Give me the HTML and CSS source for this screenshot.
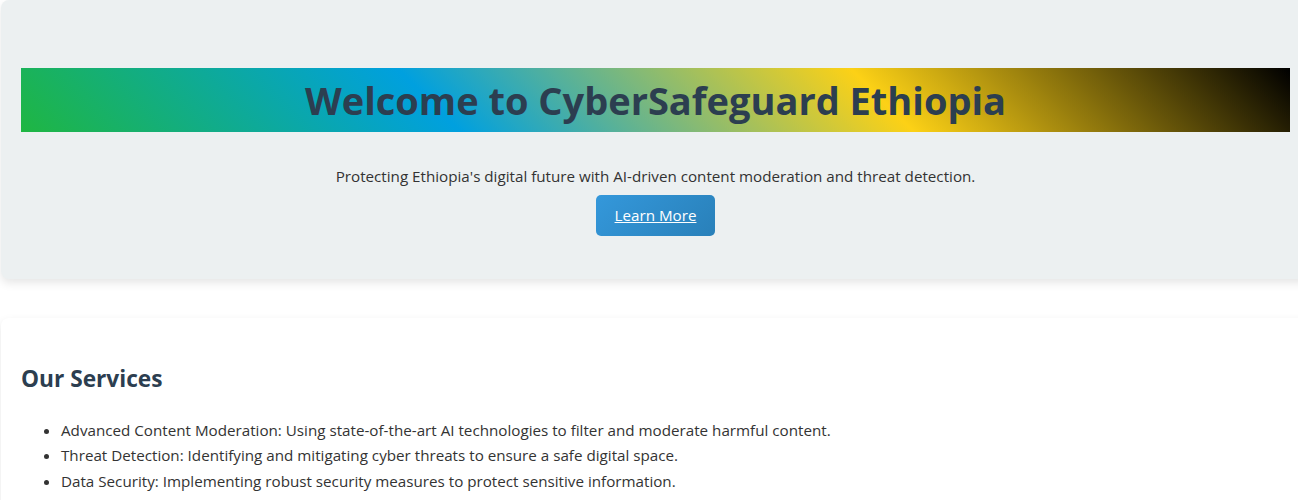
FILE: index.html
```html
<!DOCTYPE html>
<html lang="en">
<head>
<meta charset="utf-8">
<title>CyberSafeguard Ethiopia</title>
<link rel="stylesheet" href="styles.css">
</head>
<body>
<main class="page">
  <section class="hero">
    <h1 class="hero-title">Welcome to CyberSafeguard Ethiopia</h1>
    <p class="hero-text">Protecting Ethiopia's digital future with AI-driven content moderation and threat detection.</p>
    <div class="hero-actions">
      <a class="btn" href="#services">Learn More</a>
    </div>
  </section>
  <section class="card" id="services">
    <h2 class="card-title">Our Services</h2>
    <ul class="service-list">
      <li>Advanced Content Moderation: Using state-of-the-art AI technologies to filter and moderate harmful content.</li>
      <li>Threat Detection: Identifying and mitigating cyber threats to ensure a safe digital space.</li>
      <li>Data Security: Implementing robust security measures to protect sensitive information.</li>
    </ul>
  </section>
</main>
</body>
</html>
```

FILE: styles.css
```css
html, body {
  margin: 0;
  padding: 0;
  overflow: hidden;
}

body {
  background: #ffffff;
  color: #333333;
  font-family: "Open Sans", "Noto Sans", sans-serif;
  font-size: 15.2px;
  line-height: 25.6px;
}

.page {
  display: flex;
  flex-direction: column;
  gap: 39px;
  padding-left: 1px;
}

.hero,
.card {
  width: 1269px;
  flex: none;
  border-radius: 8px;
  box-shadow: 0 4px 10px rgba(0, 0, 0, 0.1);
}

.hero {
  background: #ecf0f1;
  padding: 68px 20px 43px;
  text-align: center;
}

.hero-title {
  margin: 0 0 32px;
  font-size: 38px;
  line-height: 64px;
  font-weight: 700;
  color: #2c3e50;
  background: linear-gradient(45deg, #1fb642 0%, #00a0df 33%, #fcd116 67%, #000000 100%);
}

.hero-text {
  margin: 0 0 5px;
  color: #333333;
}

.hero-actions {
  display: flex;
  justify-content: center;
}

.btn {
  display: inline-block;
  padding: 10px 19px;
  line-height: 21px;
  color: #ffffff;
  text-decoration: underline;
  border-radius: 5px;
  background: linear-gradient(135deg, #3498db, #2980b9);
}

.card {
  background: #ffffff;
  padding: 20px;
  min-height: 300px;
}

.card-title {
  margin: 22px 0 20px;
  font-size: 22.7px;
  line-height: 38px;
  font-weight: 700;
  color: #2c3e50;
}

.service-list {
  margin: 0;
  padding-left: 40px;
}
```
